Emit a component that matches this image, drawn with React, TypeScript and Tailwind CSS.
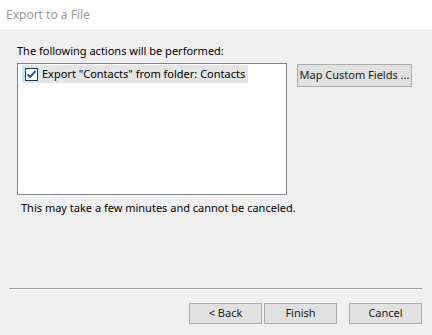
const font = { fontFamily: '"Noto Sans", "Open Sans", sans-serif' }

function Button({ label, className = '' }: { label: string; className?: string }) {
  return (
    <button
      className={`flex items-center justify-center whitespace-nowrap bg-[#e1e1e1] border border-[#adadad] text-[11px] text-[#1a1a1a] ${className}`}
    >
      {label}
    </button>
  )
}

export default function App() {
  return (
    <div className="w-[432px] h-[335px] flex flex-col bg-[#f0f0f0] text-[11px] text-black whitespace-nowrap" style={font}>
      {/* title bar */}
      <div className="h-[29px] bg-white flex items-center pl-[6px] text-[12px] text-[#9a9a9a]">
        Export to a File
      </div>

      <div className="flex-1 flex flex-col pl-[17px] pr-[20px]">
        <div className="mt-[14px] h-[16px] leading-[16px]">The following actions will be performed:</div>

        <div className="mt-[4px] flex items-start gap-[10px]">
          <div className="w-[270px] h-[132px] bg-white border border-[#828790] pt-[1px] pl-[4px]">
            <div className="flex items-center h-[18px] w-[226px] bg-[#e5e5e5]">
              <div className="w-[18px] h-[18px] bg-[#cce8ff] flex items-center justify-center">
                <div className="w-[13px] h-[13px] border border-[#333] bg-white flex items-center justify-center">
                  <svg width="11" height="11" viewBox="0 0 11 11">
                    <path d="M1.5 5.3 L4.2 8 L9.5 2" fill="none" stroke="#1f5fae" strokeWidth="1.9" />
                  </svg>
                </div>
              </div>
              <span className="ml-[2px] leading-[18px]">Export "Contacts" from folder: Contacts</span>
            </div>
          </div>
          <Button label="Map Custom Fields ..." className="w-[115px] h-[23px] mt-[1px]" />
        </div>

        <div className="mt-[5px] pl-[4px] h-[16px] leading-[16px]">This may take a few minutes and cannot be canceled.</div>

        <div className="flex-1" />
      </div>

      <div className="mx-[9px] h-[2px] border-t border-[#a0a0a0] bg-white w-[413px]" />

      <div className="h-[45px] flex items-start justify-end pr-[10px] pt-[13px]">
        <Button label="< Back" className="w-[73px] h-[21px]" />
        <Button label="Finish" className="w-[73px] h-[21px] ml-[2px]" />
        <Button label="Cancel" className="w-[73px] h-[21px] ml-[12px]" />
      </div>
    </div>
  )
}
